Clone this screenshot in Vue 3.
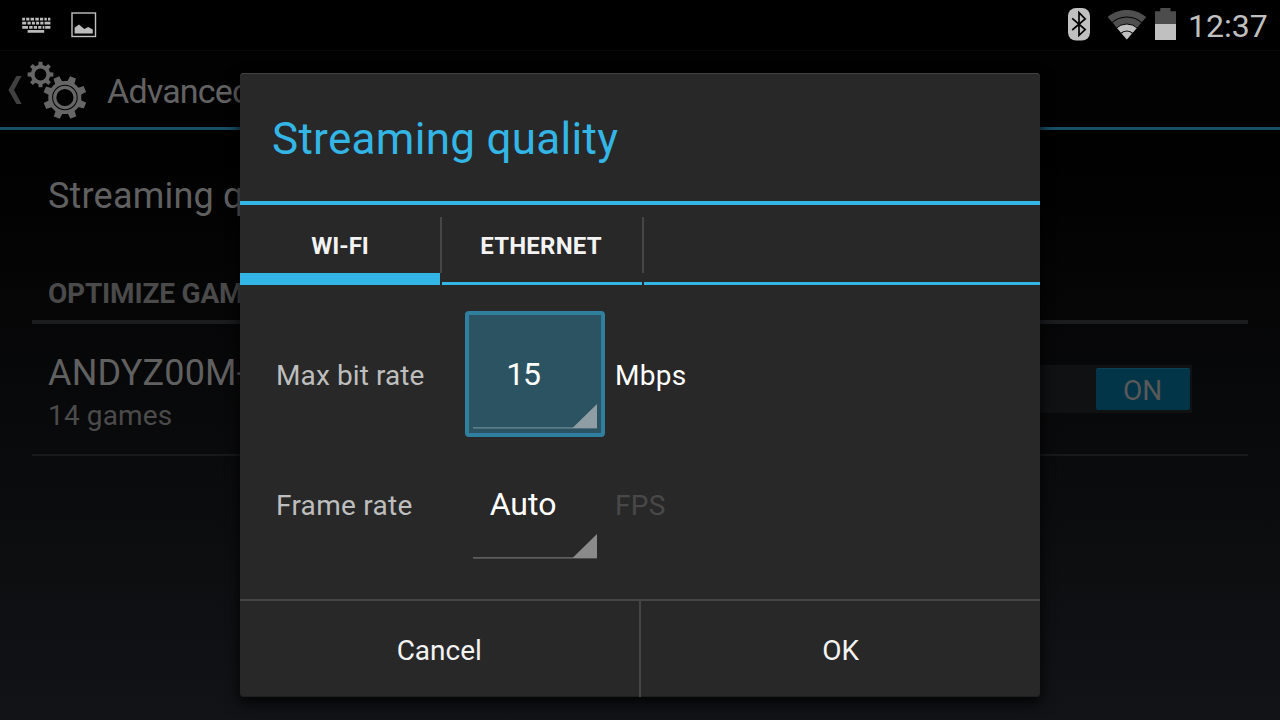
<script setup>
// Outline of an eight-toothed cog centred on (cx, cy).
function gear(cx, cy, outer, inner, half, offset) {
  const pts = []
  for (let i = 0; i < 8; i++) {
    const a = ((i * 45 + offset) * Math.PI) / 180
    const corners = [
      [inner, -half * 1.15],
      [outer, -half],
      [outer, half],
      [inner, half * 1.15],
    ]
    corners.forEach(([r, w], k) => {
      const along = Math.sqrt(r * r - w * w)
      const x = cx + along * Math.cos(a) - w * Math.sin(a)
      const y = cy + along * Math.sin(a) + w * Math.cos(a)
      const p = `${x.toFixed(2)} ${y.toFixed(2)}`
      if (i === 0 && k === 0) pts.push(`M${p}`)
      else if (k === 0) pts.push(`A${inner} ${inner} 0 0 1 ${p}`)
      else pts.push(`L${p}`)
    })
  }
  return pts.join(' ') + 'Z'
}

function circle(cx, cy, r) {
  return `M${cx - r} ${cy}a${r} ${r} 0 1 0 ${2 * r} 0a${r} ${r} 0 1 0 ${-2 * r} 0Z`
}

const smallGear = gear(13.5, 13.5, 13, 9.7, 1.9, 0) + circle(13.5, 13.5, 5.9)
const bigGear = gear(37.9, 36.5, 21.9, 16.6, 3.2, 22) + circle(37.9, 36.5, 12.8)
const bigRing = circle(37.9, 36.5, 11.8) + circle(37.9, 36.5, 8.6)
</script>

<template>
  <div class="screen">
    <header class="status">
      <div class="notes">
        <svg width="30" height="18" viewBox="0 0 30 18" class="keyboard">
          <g fill="none" stroke="#bcbcbc" stroke-width="2.7">
            <path d="M0.2 2.2H3M4.2 2.2H7.4M8.6 2.2H12M13.3 2.2H16.8M18 2.2H21.2M22.4 2.2H24.8M26 2.2H28.4" />
            <path d="M0.2 6.2H4.2M5.5 6.2H8.7M9.9 6.2H12.9M14.1 6.2H17.1M18.3 6.2H21.4M22.6 6.2H28.4" />
            <path d="M0.2 10.3H6M7.2 10.3H10.6M11.8 10.3H15M16.2 10.3H19.4M20.6 10.3H22.4M23.2 10.3H28.4" />
            <path d="M5.6 14.4H22.2" />
          </g>
        </svg>
        <svg width="26" height="26" viewBox="0 0 26 26" class="picture">
          <rect x="1" y="1" width="23.5" height="23.5" fill="none" stroke="#c0c0c0" stroke-width="1.4" />
          <path d="M3.6 21.6V15.8L8 12.5 13.3 16.9 17.2 15 21.8 17.5V21.6Z" fill="#bcbcbc" />
        </svg>
      </div>
      <div class="system">
        <svg width="22" height="33" viewBox="0 0 22 33" class="bluetooth">
          <rect x="0" y="0" width="22" height="32.5" rx="8" fill="#c0c0c0" />
          <path d="M4.2 10.3 17.2 21.5 11 27.3V4.6L17.2 11 4.2 22" fill="none" stroke="#000" stroke-width="1.7" />
        </svg>
        <svg width="40" height="30" viewBox="0 0 40 30" class="wifi">
          <defs>
            <clipPath id="fan"><path d="M19.8 29.5 0 6.3V0H40V6.3Z" /></clipPath>
          </defs>
          <g clip-path="url(#fan)">
            <circle cx="19.8" cy="29.5" r="29.6" fill="#4f4f4f" />
            <circle cx="19.8" cy="29.5" r="22.5" fill="none" stroke="#000" stroke-width="1.2" />
            <circle cx="19.8" cy="29.5" r="15.5" fill="#c0c0c0" stroke="#000" stroke-width="1" />
            <circle cx="19.8" cy="29.5" r="8.5" fill="none" stroke="#000" stroke-width="1.2" />
          </g>
        </svg>
        <svg width="21" height="32" viewBox="0 0 21 32" class="battery">
          <path d="M0 16V3.2H5.3V0H15.5V3.2H21V16Z" fill="#4c4c4c" />
          <rect x="0" y="16" width="21" height="16" fill="#c0c0c0" />
        </svg>
        <span class="clock">12:37</span>
      </div>
    </header>

    <div class="actionbar">
      <svg width="14" height="28" viewBox="0 0 14 28" class="back">
        <path d="M8.4 0H13.6L6 14 13.6 28H8.4L0.4 14Z" fill="#404040" />
      </svg>
      <svg width="60" height="59" viewBox="0 0 60 59" class="gears" fill="#666" fill-rule="evenodd">
        <path :d="smallGear" />
        <path :d="bigGear" />
        <path :d="bigRing" />
      </svg>
      <h1>Advanced</h1>
    </div>

    <main>
      <div class="item">Streaming quality</div>
      <div class="section">OPTIMIZE GAMES</div>
      <div class="host">
        <div>
          <div class="name">ANDYZ00M-</div>
          <div class="count">14 games</div>
        </div>
        <div class="switch"><span class="thumb">ON</span></div>
      </div>
    </main>

    <section class="dialog">
      <h2><span>Streaming quality</span></h2>
      <nav>
        <div class="tab active"><span>WI-FI</span></div>
        <div class="tab"><span class="ethernet">ETHERNET</span></div>
        <div class="rest"></div>
      </nav>
      <div class="form">
        <div class="row">
          <span class="label">Max bit rate</span>
          <div class="spinner focused">
            <span class="bits">15</span>
            <svg width="124" height="26" viewBox="0 0 124 26" class="corner">
              <path d="M0 24.9H124" stroke="#fff" stroke-opacity=".32" stroke-width="1.3" />
              <path d="M100 24.5 124 1V25H100Z" fill="#8f9ea5" />
            </svg>
          </div>
          <span class="unit">Mbps</span>
        </div>
        <div class="row">
          <span class="label frame">Frame rate</span>
          <div class="spinner">
            <span>Auto</span>
            <svg width="124" height="26" viewBox="0 0 124 26" class="corner">
              <path d="M0 24.9H124" stroke="#707070" stroke-width="1.3" />
              <path d="M100 24.5 124 1V25H100Z" fill="#8a8a8a" />
            </svg>
          </div>
          <span class="unit off">FPS</span>
        </div>
      </div>
      <footer>
        <button>Cancel</button>
        <button>OK</button>
      </footer>
    </section>
  </div>
</template>

<style>
body {
  background: #000;
}
</style>

<style scoped>
* {
  box-sizing: border-box;
}
.screen {
  position: relative;
  width: 1280px;
  height: 720px;
  overflow: hidden;
  font-family: Roboto, sans-serif;
  background: linear-gradient(#000 0, #000 130px, #121316 720px);
}
svg {
  display: block;
  flex: none;
}
h1,
h2 {
  margin: 0;
  font-weight: 400;
}
.status {
  display: flex;
  justify-content: space-between;
  height: 50px;
  background: #000;
}
.notes,
.system {
  display: flex;
}
.keyboard {
  margin: 17px 0 0 22px;
}
.picture {
  margin: 12px 0 0 19px;
}
.bluetooth {
  margin: 8px 17px 0 0;
}
.wifi {
  margin: 10px 8px 0 0;
}
.battery {
  margin-top: 8px;
}
.clock {
  width: 91px;
  margin-right: 13px;
  padding-left: 12px;
  font-size: 32px;
  line-height: 52px;
  color: #c0c0c0;
}
.actionbar {
  display: flex;
  height: 80px;
  border-top: 1px solid #080808;
  border-bottom: 3px solid #174e66;
  background: #020202;
}
.back {
  margin: 25px 0 0 8px;
}
.gears {
  margin: 10px 0 0 5px;
}
h1 {
  margin-left: 20px;
  font-size: 34px;
  line-height: 81px;
  letter-spacing: -0.8px;
  color: #626262;
}
main {
  margin: 0 32px;
}
.item {
  height: 128px;
  padding-left: 16px;
  font-size: 36px;
  line-height: 132px;
  letter-spacing: 0.2px;
  color: #606060;
}
.section {
  height: 66px;
  padding: 20px 0 0 16px;
  border-bottom: 4px solid #1b1c1e;
  font-size: 28px;
  font-weight: 700;
  line-height: 32px;
  letter-spacing: -0.2px;
  color: #4a4a4a;
}
.host {
  display: flex;
  justify-content: space-between;
  height: 132px;
  padding: 28px 56px 0 16px;
  border-bottom: 2px solid #18191b;
}
.name {
  font-size: 36px;
  line-height: 42px;
  letter-spacing: 0.2px;
  color: #606060;
}
.count {
  margin-top: 4px;
  font-size: 28px;
  line-height: 36px;
  letter-spacing: 0.15px;
  color: #4b4b4b;
}
.switch {
  display: flex;
  justify-content: flex-end;
  width: 194px;
  height: 48px;
  margin-top: 13px;
  padding: 3px 2px 3px 3px;
  background: #101113;
}
.thumb {
  width: 94px;
  height: 42px;
  border-radius: 2px;
  border-top: 1px solid #0c4352;
  background: #023548;
  color: #595959;
  font-size: 28px;
  line-height: 44px;
  text-align: center;
  padding-right: 1px;
}
.dialog {
  position: absolute;
  left: 240px;
  top: 73px;
  width: 800px;
  height: 624px;
  display: flex;
  flex-direction: column;
  border-radius: 4px;
  overflow: hidden;
  background: #282828;
  box-shadow: inset 0 1px 0 #434343, inset 0 -1px 0 #1f1f1f, 0 5px 14px 1px rgba(0, 0, 0, 0.8);
}
h2 {
  height: 132px;
  padding-left: 32px;
  border-bottom: 4px solid #33b5e5;
  font-size: 44px;
  line-height: 132px;
  letter-spacing: 0.3px;
  color: #33b5e5;
}
nav {
  display: flex;
  gap: 2px;
  height: 80px;
}
.tab {
  position: relative;
  width: 200px;
  border-bottom: 3px solid #33b5e5;
  font-size: 24px;
  font-weight: 700;
  line-height: 83px;
  text-align: center;
  color: #f3f3f3;
}
.ethernet {
  margin-right: 2px;
  letter-spacing: 0.2px;
}
.tab.active {
  border-bottom-width: 12px;
}
.tab::after {
  content: '';
  position: absolute;
  left: 200px;
  top: 12px;
  width: 2px;
  height: 56px;
  background: #464646;
}
.rest {
  flex: 1;
  border-bottom: 3px solid #33b5e5;
}
.form {
  flex: 1;
  padding: 26px 0 0 36px;
}
.row {
  display: flex;
  height: 130px;
}
.label {
  width: 189px;
  font-size: 28px;
  line-height: 129px;
  letter-spacing: 0.1px;
  color: #bebebe;
}
.frame {
  letter-spacing: 0.28px;
}
.spinner {
  position: relative;
  width: 140px;
  height: 126px;
  padding-right: 24px;
  font-size: 32px;
  line-height: 127px;
  text-align: center;
  color: #fff;
}
.focused {
  border: 4px solid #2f7f9e;
  border-radius: 4px;
  background: #2c5361;
  line-height: 119px;
}
.bits {
  letter-spacing: -1.2px;
}
.corner {
  position: absolute;
  left: 8px;
  top: 92px;
}
.focused .corner {
  left: 4px;
  top: 88px;
}
.unit {
  padding-left: 10px;
  font-size: 28px;
  line-height: 129px;
  letter-spacing: 0.25px;
  color: #fff;
}
.unit.off {
  color: #484848;
}
footer {
  display: flex;
  height: 98px;
  border-top: 2px solid #464646;
}
button {
  width: 400px;
  height: 96px;
  padding: 3px 0 0 1px;
  border: 0;
  background: none;
  font: 400 28px/93px Roboto, sans-serif;
  color: #f3f3f3;
}
button:first-child {
  width: 401px;
  padding-left: 0;
  border-right: 2px solid #464646;
}
</style>
